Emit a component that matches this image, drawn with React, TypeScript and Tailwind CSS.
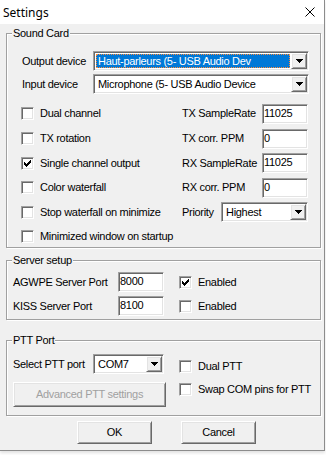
import React from 'react';

const sunken =
  'bg-white border border-t-[#a0a0a0] border-l-[#a0a0a0] border-b-white border-r-white shadow-[inset_1px_1px_0_#696969,inset_-1px_-1px_0_#e3e3e3]';
const raised =
  'bg-[#f0f0f0] border border-t-white border-l-white border-b-[#696969] border-r-[#696969] shadow-[inset_1px_1px_0_#e3e3e3,inset_-1px_-1px_0_#a0a0a0]';
const groupBox =
  'relative ml-[6px] w-[315px] border border-[#a0a0a0] shadow-[inset_1px_1px_0_#fff,1px_1px_0_#fff]';

function Legend({ children }: { children: React.ReactNode }) {
  return <span className="absolute left-[5px] -top-[7px] px-[1px] bg-[#f0f0f0] leading-[13px]">{children}</span>;
}

function Check({ checked }: { checked?: boolean }) {
  return (
    <span className={`w-[13px] h-[13px] shrink-0 flex items-center justify-center ${sunken}`}>
      {checked && (
        <svg width="7" height="7" viewBox="0 0 7 7" shapeRendering="crispEdges">
          <path d="M0 2h1v1h1v1h1v-1h1v-1h1v-1h1v-1h1v3h-1v1h-1v1h-1v1h-1v1h-1v-1h-1v-1h-1v-1h-1z" fill="#000" />
        </svg>
      )}
    </span>
  );
}

function CheckRow({ label, checked, className = '' }: { label: string; checked?: boolean; className?: string }) {
  return (
    <div className={`flex items-center gap-[6px] ${className}`}>
      <Check checked={checked} />
      <span>{label}</span>
    </div>
  );
}

function Field({ value, className = '' }: { value: string; className?: string }) {
  return <div className={`h-[20px] pl-[1px] pt-[2px] leading-[13px] ${sunken} ${className}`}>{value}</div>;
}

function Arrow() {
  return (
    <svg width="7" height="4" viewBox="0 0 7 4" shapeRendering="crispEdges">
      <path d="M0 0h7v1h-1v1h-1v1h-1v1h-1v-1h-1v-1h-1v-1h-1z" fill="#000" />
    </svg>
  );
}

function Combo({ value, className = '', focused }: { value: string; className?: string; focused?: boolean }) {
  return (
    <div className={`h-[20px] p-[1px] flex ${sunken} ${className}`}>
      <div className="flex-1 min-w-0 p-[1px] flex">
        <div
          className={`flex-1 min-w-0 whitespace-nowrap overflow-hidden leading-[13px] pl-[2px] pt-[1px] ${
            focused ? 'bg-[#0078d7] text-white outline outline-1 outline-dotted outline-[#ff8c3a] -outline-offset-1' : ''
          }`}
        >
          {value}
        </div>
      </div>
      <div className={`w-[16px] h-full flex items-center justify-center ${raised}`}>
        <Arrow />
      </div>
    </div>
  );
}

function Button({ label, disabled, className = '' }: { label: string; disabled?: boolean; className?: string }) {
  return (
    <div
      className={`flex items-center justify-center ${raised} ${disabled ? 'text-[#a0a0a0]' : 'text-black'} ${className}`}
    >
      {label}
    </div>
  );
}

const soundRows = [
  { label: 'Dual channel', right: 'TX SampleRate', value: '11025', h: 'h-[25px]' },
  { label: 'TX rotation', right: 'TX corr. PPM', value: '0', h: 'h-[25px]' },
  { label: 'Single channel output', checked: true, right: 'RX SampleRate', value: '11025', h: 'h-[24px]' },
  { label: 'Color waterfall', right: 'RX corr. PPM', value: '0', h: 'h-[25px]' },
];

export default function App() {
  return (
    <div className="w-[326px] h-[455px] bg-white text-black text-[11px] leading-[13px] tracking-[-0.3px] font-['Liberation_Sans',Arial,sans-serif]">
      <div className="w-[325px] h-[451px] flex flex-col border-r border-b border-[#8c8c8c] shadow-[0_2px_3px_rgba(0,0,0,0.12)]">
        {/* Title bar */}
        <div className="h-[24px] shrink-0 bg-white flex items-center justify-between pl-[3px] pr-[9px]">
          <span className="text-[12px] tracking-normal font-['Noto_Sans',sans-serif]">Settings</span>
          <svg width="10" height="10" viewBox="0 0 10 10">
            <path d="M0.5 0.5L9.5 9.5M9.5 0.5L0.5 9.5" stroke="#000" strokeWidth="1" />
          </svg>
        </div>

        <div className="flex-1 bg-[#f0f0f0] pt-[9px]">
          {/* Sound Card */}
          <div className={`${groupBox} h-[215px]`}>
            <Legend>Sound Card</Legend>
            <div className="flex items-center h-[20px] mt-[17px] pl-[15px]">
              <span className="w-[71px]">Output device</span>
              <Combo className="w-[216px]" value="Haut-parleurs (5- USB Audio Dev" focused />
            </div>
            <div className="flex items-center h-[20px] mt-[3px] pl-[15px]">
              <span className="w-[71px]">Input device</span>
              <Combo className="w-[216px]" value="Microphone (5- USB Audio Device" />
            </div>
            <div className="mt-[7px]">
              {soundRows.map((r) => (
                <div key={r.label} className={`flex items-center ${r.h}`}>
                  <CheckRow className="w-[175px] pl-[14px]" label={r.label} checked={r.checked} />
                  <span className="w-[80px]">{r.right}</span>
                  <Field className="w-[46px]" value={r.value} />
                </div>
              ))}
              <div className="flex items-center h-[24px]">
                <CheckRow className="w-[175px] pl-[14px]" label="Stop waterfall on minimize" />
                <span className="w-[39px]">Priority</span>
                <Combo className="w-[87px]" value="Highest" />
              </div>
              <div className="flex items-center h-[25px]">
                <CheckRow className="pl-[14px]" label="Minimized window on startup" />
              </div>
            </div>
          </div>

          {/* Server setup */}
          <div className={`${groupBox} h-[60px] mt-[12px]`}>
            <Legend>Server setup</Legend>
            <div className="flex items-center h-[20px] mt-[11px] pl-[6px]">
              <span className="w-[105px]">AGWPE Server Port</span>
              <Field className="w-[46px]" value="8000" />
              <CheckRow className="ml-[15px]" label="Enabled" checked />
            </div>
            <div className="flex items-center h-[20px] mt-[4px] pl-[6px]">
              <span className="w-[105px]">KISS Server Port</span>
              <Field className="w-[46px]" value="8100" />
              <CheckRow className="ml-[15px]" label="Enabled" />
            </div>
          </div>

          {/* PTT Port */}
          <div className={`${groupBox} h-[76px] mt-[20px] flex pl-[6px]`}>
            <Legend>PTT Port</Legend>
            <div className="w-[153px]">
              <div className="flex items-center h-[20px] mt-[13px]">
                <span className="w-[80px]">Select PTT port</span>
                <Combo className="w-[71px]" value="COM7" />
              </div>
              <Button className="mt-[8px] h-[25px] w-[153px]" label="Advanced PTT settings" disabled />
            </div>
            <div className="ml-[13px]">
              <CheckRow className="mt-[19px]" label="Dual PTT" />
              <CheckRow className="mt-[10px]" label="Swap COM pins for PTT" />
            </div>
          </div>

          {/* Buttons */}
          <div className="flex mt-[5px] pl-[77px] gap-[29px]">
            <Button className="w-[75px] h-[23px]" label="OK" />
            <Button className="w-[75px] h-[23px]" label="Cancel" />
          </div>
        </div>
      </div>
    </div>
  );
}
